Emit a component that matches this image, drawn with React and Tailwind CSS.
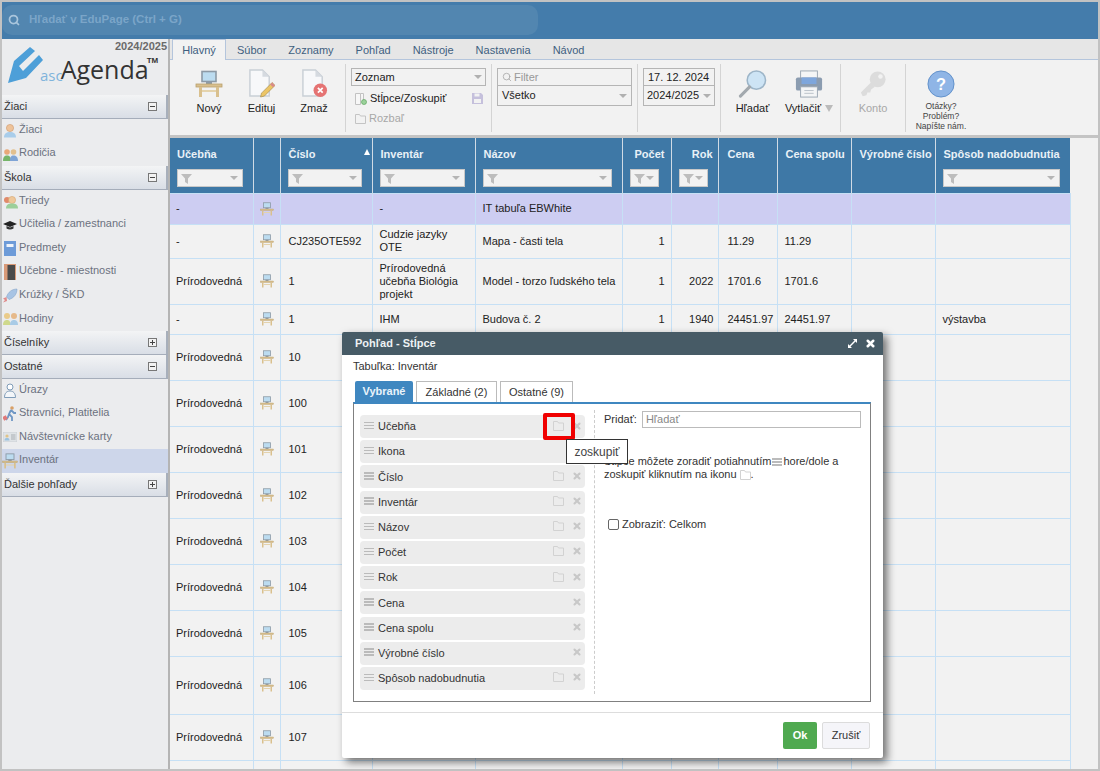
import React from 'react';
import { Search, X } from 'lucide-react';

const FONT = "font-['Liberation_Sans',Arial,sans-serif]";

// ── small drawings ────────────────────────────────────────────────────
function Desk({ size = 16 }) {
  return (
    <svg width={size} height={size} viewBox="0 0 28 28" className="block">
      <rect x="7" y="1.5" width="14" height="10" fill="#bcdcf0" stroke="#8d9aa6" strokeWidth="1.6" />
      <rect x="11" y="11.5" width="6" height="2.5" fill="#8d9aa6" />
      <rect x="1" y="14" width="26" height="3" fill="#d9c08e" stroke="#b9a06e" strokeWidth="0.8" />
      <rect x="4" y="17" width="3" height="10" fill="#d9c08e" />
      <rect x="21" y="17" width="3" height="10" fill="#d9c08e" />
      <rect x="7" y="20" width="14" height="2" fill="#e4d3ad" />
    </svg>
  );
}

function DocIcon({ badge }) {
  return (
    <svg width="27" height="29" viewBox="0 0 28 30" className="block">
      <path d="M2 1h13l7 7v20H2z" fill="#f7f8fa" stroke="#c9cfd6" strokeWidth="1.5" />
      <path d="M15 1v7h7z" fill="#d5dae0" />
      {badge === 'edit' && (
        <g>
          <path d="M25 14l3 3-11 11-4 1 1-4z" fill="#ecc566" stroke="#a68c4d" strokeWidth="0.7" />
          <path d="M25 14l3 3-2 2-3-3z" fill="#d98a8a" />
        </g>
      )}
      {badge === 'del' && (
        <g>
          <circle cx="20" cy="22" r="7" fill="#e57373" />
          <path d="M17.5 19.5l5 5m0-5l-5 5" stroke="#fff" strokeWidth="1.8" />
        </g>
      )}
    </svg>
  );
}

function Magnifier() {
  return (
    <svg width="29" height="28" viewBox="0 0 30 29" className="block">
      <circle cx="19" cy="10.500" r="9.500" fill="#cde4f5" stroke="#9db5c8" strokeWidth="1.6" />
      <path d="M12 17.500L2.500 27" stroke="#a3a9ae" strokeWidth="3.2" strokeLinecap="round" />
    </svg>
  );
}

function Printer() {
  return (
    <svg width="28" height="28" viewBox="0 0 30 30" className="block">
      <rect x="6" y="1" width="18" height="9" fill="#f4f5f6" stroke="#9aa6b2" />
      <rect x="1" y="8" width="28" height="14" rx="2" fill="#8b9cb0" />
      <rect x="7" y="8" width="16" height="7" fill="#7ea6dc" />
      <rect x="6" y="18" width="18" height="11" fill="#f4f5f6" stroke="#9aa6b2" />
      <path d="M10 22h10M10 25h10" stroke="#b8c0c8" />
    </svg>
  );
}

function KeyIcon() {
  return (
    <svg width="28" height="28" viewBox="0 0 30 30" className="block">
      <path d="M2 24l11-11 4 5-4 3-1 3-3 0-1 3-4 1z" fill="#dcdcdc" />
      <circle cx="20" cy="10" r="8.5" fill="#dcdcdc" />
      <circle cx="23" cy="7" r="2.4" fill="#f2f2f2" />
    </svg>
  );
}

function HelpCircle() {
  return (
    <svg width="28" height="28" viewBox="0 0 29 29" className="block">
      <circle cx="14.5" cy="14.5" r="13.5" fill="#8fb5e6" stroke="#5f8fc9" />
      <text x="14.5" y="20.5" textAnchor="middle" fontSize="17" fontWeight="700" fill="#fff" fontFamily="Liberation Sans">?</text>
    </svg>
  );
}

function FunnelArrow() {
  return (
    <>
      <svg width="11" height="11" viewBox="0 0 11 11" className="block shrink-0">
        <path d="M0 1h11L7 5.5V11L4 9V5.5z" fill="#bdbdbd" />
      </svg>
      <span className="ml-auto w-0 h-0 border-x-[4px] border-x-transparent border-t-[4px] border-t-[#b5b5b5]" />
    </>
  );
}

function FolderGlyph({ color = '#d2d2d2' }) {
  return (
    <svg width="11" height="10" viewBox="0 0 11 10" className="block">
      <path d="M.5 9.5V.5h4l1 1.5h5v7.500z" fill="none" stroke={color} />
    </svg>
  );
}

function Handle() {
  return (
    <span className="flex flex-col gap-[1.500px] w-[10px] shrink-0">
      <span className="h-[1.500px] bg-[#bbb]" />
      <span className="h-[1.500px] bg-[#bbb]" />
      <span className="h-[1.500px] bg-[#bbb]" />
    </span>
  );
}

function Person({ skin = '#eec39a', body = '#a9cdea' }) {
  return (
    <svg width="14" height="15" viewBox="0 0 14 15" className="block">
      <circle cx="7" cy="5" r="3.6" fill={skin} stroke="#c98f5f" strokeWidth="0.5" />
      <path d="M1 14.5c0-4 2.5-5.5 6-5.5s6 1.500 6 5.500z" fill={body} />
    </svg>
  );
}

function SideIcon({ name }) {
  if (name === 'ziaci') return <Person />;
  if (name === 'rodicia')
    return (
      <svg width="15" height="15" viewBox="0 0 15 15" className="block">
        <circle cx="4" cy="5" r="2.8" fill="#e8a878" />
        <path d="M0 14c0-4 1.500-5.500 4-5.500S8 10 8 14z" fill="#76b56a" />
        <circle cx="10.500" cy="5" r="2.800" fill="#e3c08e" />
        <path d="M7 14c0-4 1-5.500 3.500-5.500S15 10 15 14z" fill="#7fa4d6" />
      </svg>
    );
  if (name === 'triedy')
    return (
      <svg width="15" height="15" viewBox="0 0 15 15" className="block">
        <circle cx="4" cy="6" r="3" fill="#e08a6a" />
        <circle cx="9" cy="6" r="3.600" fill="#efc89b" stroke="#d09a60" strokeWidth="0.5" />
        <path d="M3 14.500c0-4 2.500-5 6-5s6 1 6 5z" fill="#9ccf9a" />
      </svg>
    );
  if (name === 'ucitelia')
    return (
      <svg width="14" height="14" viewBox="0 0 14 14" className="block">
        <path d="M0 6l7-3 7 3-7 3z" fill="#222" />
        <path d="M3.500 8v2.500c2 1.200 5 1.200 7 0V8L7 9.500z" fill="#333" />
      </svg>
    );
  if (name === 'predmety')
    return (
      <svg width="12" height="15" viewBox="0 0 12 15" className="block">
        <rect x="0" y="0" width="12" height="15" fill="#6d9bd8" />
        <rect x="2.500" y="3" width="7" height="3" fill="#eef3fa" />
      </svg>
    );
  if (name === 'ucebne')
    return (
      <svg width="12" height="16" viewBox="0 0 12 16" className="block">
        <rect x="0" y="0" width="12" height="16" fill="#d99a78" />
        <rect x="3.500" y="1" width="7.500" height="15" fill="#4a4a4a" />
      </svg>
    );
  if (name === 'kruzky')
    return (
      <svg width="15" height="15" viewBox="0 0 15 15" className="block">
        <path d="M14 1c-5 0-9 3-10.500 8l2.500 2.500C11 10 14 6 14 1z" fill="#a8c4e4" stroke="#7b9cc2" strokeWidth="0.5" />
        <path d="M3.500 9L0 10.500 2 12l-2 2.500L4 13z" fill="#e08a8a" />
      </svg>
    );
  if (name === 'hodiny')
    return (
      <svg width="15" height="14" viewBox="0 0 15 14" className="block">
        <circle cx="4" cy="4" r="3" fill="#eacb8a" />
        <circle cx="11" cy="4" r="3" fill="#e6b98a" />
        <path d="M0 13c0-4 2-5 4-5s3.500 1 3.500 5z" fill="#cfd98c" />
        <path d="M7 13c0-4 2-5 4-5s4 1 4 5z" fill="#a9cbe6" />
      </svg>
    );
  if (name === 'urazy')
    return (
      <svg width="14" height="15" viewBox="0 0 14 15" className="block">
        <circle cx="7" cy="4" r="3" fill="#fff" stroke="#7f9cb8" />
        <path d="M1.500 14.500c0-4 2-6.500 5.500-6.500s5.500 2.500 5.500 6.500z" fill="#f3f6f9" stroke="#7f9cb8" />
      </svg>
    );
  if (name === 'stravnici')
    return (
      <svg width="14" height="16" viewBox="0 0 14 16" className="block">
        <circle cx="9" cy="2" r="1.800" fill="#d9a066" />
        <path d="M8 4l3 3 2 0M8 4L6 8l3 3 0 4M6 8l-1 3-2 3" stroke="#6f97c4" strokeWidth="1.800" fill="none" />
        <rect x="0" y="10" width="4" height="4" fill="#e07a7a" transform="rotate(-30 2 12)" />
      </svg>
    );
  if (name === 'karty')
    return (
      <svg width="14" height="10" viewBox="0 0 14 10" className="block">
        <rect x="0" y="0" width="14" height="10" fill="#dfe3e6" stroke="#c2c7cc" strokeWidth="0.600" />
        <circle cx="4" cy="4" r="1.600" fill="#dfc48a" />
        <path d="M1.500 8.500c0-2 1-2.500 2.500-2.500s2.500.5 2.500 2.500z" fill="#9cc3e0" />
        <path d="M8 3h4.500M8 5h4.500M8 7h4.500" stroke="#a9aeb3" />
      </svg>
    );
  return <Desk size={16} />;
}

// ── sidebar ───────────────────────────────────────────────────────────
function GroupHeader({ label, open }) {
  return (
    <div className="h-[23.700px] flex items-center pl-[2px] pr-[9px] text-[11px] text-[#333] bg-gradient-to-b from-[#f3f4f5] to-[#d9dee6] border-b border-[#a5adba] border-r-2 border-r-[#a7afbb]">
      <span>{label}</span>
      <span className="ml-auto w-[9px] h-[9px] border border-[#777] bg-[#f2f2f2] relative">
        <span className="absolute left-[1px] right-[1px] top-[3px] h-px bg-[#444]" />
        {!open && <span className="absolute top-[1px] bottom-[1px] left-[3px] w-px bg-[#444]" />}
      </span>
    </div>
  );
}

function SideItem({ icon, label, active }) {
  return (
    <div className={`h-[23.600px] flex items-center text-[11px] text-[#6b7280] ${active ? 'bg-[#cdd6ea]' : ''}`}>
      <span className="w-[16px] flex justify-center shrink-0">
        <SideIcon name={icon} />
      </span>
      <span className="ml-[1px] mb-[3px]">{label}</span>
    </div>
  );
}

function Sidebar() {
  return (
    <aside className="w-[168px] shrink-0 bg-[#ebecee] border-r-2 border-[#b4b4b4] overflow-hidden">
      <div className="h-[56px] relative">
        <div className="absolute right-[1px] top-[1px] text-[11px] leading-[13px] font-bold text-[#6a6a6a]">2024/2025</div>
        <div className="absolute left-[6px] top-[6px] flex items-start">
          <svg width="36" height="37" viewBox="0 0 36 37" className="block mt-[2px] -mr-[4px]">
            <path d="M0 36L6 14 22 0l5 4L11 19l4 5L31 8l4 5-17 18z" fill="#4d9fd8" />
          </svg>
          <span className="mt-[20px] -mr-[2px] text-[15px] leading-[20px] text-[#7fb4dc] font-['Open_Sans',sans-serif]">asc</span>
          <span className="mt-[12px] text-[25px] leading-[24px] text-[#333] font-['Open_Sans',sans-serif]">Agenda</span>
          <span className="mt-[11px] -ml-[2px] text-[8px] leading-[9px] font-bold text-[#333]">TM</span>
        </div>
      </div>
      <GroupHeader label="Žiaci" open />
      <SideItem icon="ziaci" label="Žiaci" />
      <SideItem icon="rodicia" label="Rodičia" />
      <GroupHeader label="Škola" open />
      <SideItem icon="triedy" label="Triedy" />
      <SideItem icon="ucitelia" label="Učitelia / zamestnanci" />
      <SideItem icon="predmety" label="Predmety" />
      <SideItem icon="ucebne" label="Učebne - miestnosti" />
      <SideItem icon="kruzky" label="Krúžky / ŠKD" />
      <SideItem icon="hodiny" label="Hodiny" />
      <GroupHeader label="Číselníky" />
      <GroupHeader label="Ostatné" open />
      <SideItem icon="urazy" label="Úrazy" />
      <SideItem icon="stravnici" label="Stravníci, Platitelia" />
      <SideItem icon="karty" label="Návštevnícke karty" />
      <SideItem icon="desk" label="Inventár" active />
      <GroupHeader label="Ďalšie pohľady" />
    </aside>
  );
}

// ── ribbon ────────────────────────────────────────────────────────────
const TABS = ['Súbor', 'Zoznamy', 'Pohľad', 'Nástroje', 'Nastavenia', 'Návod'];

function RibbonTabs() {
  return (
    <div className="h-[21px] pl-[2px] flex items-stretch bg-[#e6e6e6] border-b border-[#b4c5dc] text-[11px] text-[#3f5f80]">
      <div className="w-[54px] h-[21px] flex items-center justify-center bg-[#f2f2f2] border border-b-0 border-[#b4c5dc]">Hlavný</div>
      <div className="flex items-center pl-[11px] pt-[2px] gap-[22px]">
        {TABS.map(t => <span key={t}>{t}</span>)}
      </div>
    </div>
  );
}

function BigBtn({ icon, label, w, muted, caret }) {
  return (
    <div className="flex flex-col items-center shrink-0" style={{ width: w }}>
      <div className="h-[29px] flex items-end justify-center">{icon}</div>
      <div className={`mt-[3px] h-[14px] flex items-center gap-[4px] text-[11px] ${muted ? 'text-[#a8a8a8]' : 'text-[#222]'}`}>
        {label}
        {caret && <span className="w-0 h-0 border-x-[4px] border-x-transparent border-t-[7px] border-t-[#bbb]" />}
      </div>
    </div>
  );
}

function Sep({ ml }) {
  return <div className="w-px h-[68px] bg-[#d4d4d4] shrink-0" style={{ marginLeft: ml }} />;
}

function Caret() {
  return <span className="ml-auto w-0 h-0 border-x-[4px] border-x-transparent border-t-[4px] border-t-[#b0b0b0]" />;
}

function Ribbon() {
  return (
    <div className="h-[78px] bg-[#f2f2f2] border-b-[3px] border-[#c4c4c4] flex items-start pt-[4px]">
      <div className="flex shrink-0 pt-[5px] pl-[13px]">
        <BigBtn w={52} label="Nový" icon={<Desk size={28} />} />
        <BigBtn w={53} label="Edituj" icon={<DocIcon badge="edit" />} />
        <BigBtn w={52} label="Zmaž" icon={<DocIcon badge="del" />} />
      </div>
      <Sep ml={5} />
      <div className="ml-[5px] w-[135px] shrink-0 pt-[4px] text-[11px]">
        <div className="h-[18px] border border-[#b5b5b5] flex items-center px-[3px] text-[#222]">Zoznam<Caret /></div>
        <div className="mt-[3px] h-[19px] flex items-center pl-[4px] pr-[3px] text-[#222]">
          <svg width="12" height="12" viewBox="0 0 12 12" className="block mr-[3px]">
            <path d="M.5.5h5v11h-5zM5.500.5h3v7" fill="#f7f7f7" stroke="#c2c2c2" />
            <circle cx="9" cy="9" r="2.500" fill="#9bd19b" stroke="#5fa65f" strokeWidth="0.700" />
          </svg>
          Stĺpce/Zoskupiť
          <svg width="11" height="11" viewBox="0 0 11 11" className="block ml-auto">
            <path d="M0 0h9l2 2v9H0z" fill="#c5c0dc" />
            <rect x="2.500" y="0.500" width="5" height="3" fill="#f2f2f2" />
            <rect x="2" y="6" width="7" height="4" fill="#f2f2f2" />
          </svg>
        </div>
        <div className="mt-[1px] h-[19px] flex items-center pl-[4px] text-[#a8a8a8]">
          <span className="mr-[3px]"><FolderGlyph color="#c4c4c4" /></span>Rozbaľ
        </div>
      </div>
      <Sep ml={5} />
      <div className="ml-[5px] w-[135px] shrink-0 pt-[4px] text-[11px]">
        <div className="h-[18px] border border-[#b5b5b5] flex items-center px-[4px] text-[#999]">
          <Search size={10} color="#aaa" strokeWidth={2} className="mr-[2px]" />Filter
        </div>
        <div className="h-[20px] border border-t-0 border-[#b5b5b5] flex items-center px-[4px] text-[#222]">Všetko<Caret /></div>
      </div>
      <Sep ml={5} />
      <div className="ml-[5px] w-[72px] shrink-0 pt-[4px] text-[11px]">
        <div className="h-[18px] border border-[#b5b5b5] flex items-center px-[4px] text-[#222]">17. 12. 2024</div>
        <div className="h-[20px] border border-t-0 border-[#b5b5b5] flex items-center px-[3px] text-[#222]">2024/2025<Caret /></div>
      </div>
      <Sep ml={5} />
      <div className="flex shrink-0 pt-[5px]">
        <BigBtn w={63} label="Hľadať" icon={<Magnifier />} />
        <BigBtn w={50} label="Vytlačiť" caret icon={<Printer />} />
      </div>
      <Sep ml={6} />
      <div className="flex shrink-0 pt-[5px]">
        <BigBtn w={64} label="Konto" muted icon={<KeyIcon />} />
      </div>
      <Sep ml={0} />
      <div className="w-[70px] shrink-0 pt-[6px] flex flex-col items-center">
        <HelpCircle />
        <div className="mt-[3px] text-[8.500px] leading-[10px] text-[#444] text-center">Otázky?<br />Problém?<br />Napíšte nám.</div>
      </div>
    </div>
  );
}

// ── table ─────────────────────────────────────────────────────────────
const COLS = [
  { w: 83, label: 'Učebňa', filter: 66, head: 'pl-[7px]' },
  { w: 27, label: '', head: 'pl-[7px]' },
  { w: 92, label: 'Číslo', filter: 74, sort: true, head: 'pl-[8px]' },
  { w: 103, label: 'Inventár', filter: 85, head: 'pl-[8px]' },
  { w: 147, label: 'Názov', filter: 129, head: 'pl-[8px]' },
  { w: 49, label: 'Počet', filter: 29, head: 'text-right pr-[6px]' },
  { w: 47, label: 'Rok', filter: 29, head: 'text-right pr-[5px]' },
  { w: 59, label: 'Cena', head: 'pl-[9px]' },
  { w: 74, label: 'Cena spolu', head: 'pl-[8px]' },
  { w: 84, label: 'Výrobné číslo', head: 'pl-[8px]' },
  { w: 135, label: 'Spôsob nadobudnutia', filter: 117, head: 'pl-[8px]' },
];

const ROWS = [
  { h: 31, purple: true, cells: ['-', '', '-', 'IT tabuľa EBWhite', '', '', '', '', '', ''] },
  { h: 34, cells: ['-', 'CJ235OTE592', 'Cudzie jazyky\nOTE', 'Mapa - časti tela', '1', '', '11.29', '11.29', '', ''] },
  { h: 46, cells: ['Prírodovedná', '1', 'Prírodovedná\nučebňa Biológia\nprojekt', 'Model - torzo ľudského tela', '1', '2022', '1701.6', '1701.6', '', ''] },
  { h: 30, cells: ['-', '1', 'IHM', 'Budova č. 2', '1', '1940', '24451.97', '24451.97', '', 'výstavba'] },
  { h: 46, cells: ['Prírodovedná', '10'] },
  { h: 46, cells: ['Prírodovedná', '100'] },
  { h: 46, cells: ['Prírodovedná', '101'] },
  { h: 46, cells: ['Prírodovedná', '102'] },
  { h: 46, cells: ['Prírodovedná', '103'] },
  { h: 46, cells: ['Prírodovedná', '104'] },
  { h: 46, cells: ['Prírodovedná', '105'] },
  { h: 58, cells: ['Prírodovedná', '106'] },
  { h: 46, cells: ['Prírodovedná', '107'] },
];

function DataTable() {
  const td = 'border border-[#c6e0f5] py-0 leading-[13px] align-middle';
  return (
    <div className="flex-1 bg-[#f1f1f1] overflow-hidden">
      <table className="table-fixed border-collapse w-[900px] text-[11px] text-[#222]">
        <colgroup>
          {COLS.map((c, i) => <col key={i} style={{ width: c.w }} />)}
        </colgroup>
        <thead>
          <tr className="h-[55px] bg-[#3e78a6]">
            {COLS.map((c, i) => (
              <th key={i} className={`relative p-0 align-top font-bold text-[#e9f1f7] text-left ${i < COLS.length - 1 ? 'border-r border-[#d0dbe5]' : ''}`}>
                <div className={`pt-[9px] h-[23px] leading-[14px] whitespace-nowrap ${c.head}`}>{c.label}</div>
                {c.sort && <span className="absolute right-[2px] top-[11px] w-0 h-0 border-x-[3.500px] border-x-transparent border-b-[6px] border-b-white" />}
                {c.filter && (
                  <div className="mt-[8px] ml-[7px] h-[18px] bg-[#f2f2f2] border border-[#c8c8c8] flex items-center px-[3px] pr-[4px]" style={{ width: c.filter }}>
                    <FunnelArrow />
                  </div>
                )}
              </th>
            ))}
          </tr>
        </thead>
        <tbody>
          {ROWS.map((row, r) => {
            const [ucebna, cislo, inventar, nazov, pocet, rok, cena, spolu, vyrobne, sposob] = row.cells;
            return (
              <tr key={r} className={row.purple ? 'bg-[#cdcdf2]' : 'bg-[#f2f2f2]'} style={{ height: row.h }}>
                <td className={`${td} border-l-0 pl-[6px]`}>{ucebna}</td>
                <td className={td}><div className="flex justify-center"><Desk size={14} /></div></td>
                <td className={`${td} pl-[8px]`}>{cislo}</td>
                <td className={`${td} pl-[7px] whitespace-pre-line`}>{inventar}</td>
                <td className={`${td} pl-[7px]`}>{nazov}</td>
                <td className={`${td} text-right pr-[6px]`}>{pocet}</td>
                <td className={`${td} text-right pr-[4px]`}>{rok}</td>
                <td className={`${td} pl-[9px]`}>{cena}</td>
                <td className={`${td} pl-[7px]`}>{spolu}</td>
                <td className={`${td} pl-[7px]`}>{vyrobne}</td>
                <td className={`${td} pl-[7px]`}>{sposob}</td>
              </tr>
            );
          })}
          {/* last row, only the top of its long name shows above the window edge */}
          <tr className="bg-[#f2f2f2] h-[46px]">
            <td className={`${td} border-l-0`} />
            <td className={td} />
            <td className={td} />
            <td className={td} />
            <td className={`${td} pl-[7px] align-top pt-[6px]`}>Nabíjačka - čítačka</td>
            <td className={td} />
            <td className={td} />
            <td className={td} />
            <td className={td} />
            <td className={td} />
            <td className={td} />
          </tr>
        </tbody>
      </table>
    </div>
  );
}

// ── dialog ────────────────────────────────────────────────────────────
const COLUMN_ROWS = [
  { label: 'Učebňa', folder: true },
  { label: 'Ikona' },
  { label: 'Číslo', folder: true },
  { label: 'Inventár', folder: true },
  { label: 'Názov', folder: true },
  { label: 'Počet', folder: true },
  { label: 'Rok', folder: true },
  { label: 'Cena' },
  { label: 'Cena spolu' },
  { label: 'Výrobné číslo' },
  { label: 'Spôsob nadobudnutia', folder: true },
];

function ColumnRow({ label, folder }) {
  return (
    <div className="h-[23px] rounded-[4px] bg-[#ececec] flex items-center pl-[4px] text-[11px] text-[#333]">
      <span className="-mt-[2px]"><Handle /></span>
      <span className="ml-[4px]">{label}</span>
      <span className="ml-auto w-[11px] -mt-[2px]">{folder && <FolderGlyph />}</span>
      <X size={10} color="#c8c8c8" strokeWidth={5} className="ml-[8px] mr-[3px] -mt-[2px]" />
    </div>
  );
}

function Dialog() {
  return (
    <div className="absolute left-[340px] top-[330px] w-[541px] h-[426px] bg-white rounded-[2px] shadow-[4px_4px_9px_rgba(0,0,0,0.55)] text-[11px] text-[#333]">
      <div className="h-[23px] bg-[#475b66] rounded-t-[2px] flex items-center pl-[13px] pr-[7px] text-white font-bold">
        <span className="text-[#edf1f3]">Pohľad - Stĺpce</span>
        <svg width="9" height="9" viewBox="0 0 9 9" className="block ml-auto">
          <path d="M0 9V5l1.500 1.500L6.500 1.500 5 0h4v4L7.500 2.500 2.500 7.500 4 9z" fill="#fff" />
        </svg>
        <X size={11} color="#fff" strokeWidth={5.500} className="ml-[8px]" />
      </div>
      <div className="pl-[11px] pt-[5px] h-[26px] leading-[13px]">Tabuľka: Inventár</div>
      <div className="ml-[13px] flex gap-[3px] h-[21px]">
        <div className="w-[58px] bg-[#3f87c0] rounded-t-[2px] flex items-center justify-center font-bold text-[#eaf3fa]">Vybrané</div>
        <div className="w-[81px] border border-b-0 border-[#bbb] flex items-center justify-center">Základné (2)</div>
        <div className="w-[73px] border border-b-0 border-[#bbb] flex items-center justify-center">Ostatné (9)</div>
      </div>
      <div className="ml-[11px] w-[518px] h-[300px] border border-[#808080] border-t-2 border-t-[#3f87c0] flex">
        <div className="ml-[6px] mt-[11px] w-[225px] flex flex-col gap-[2.200px]">
          {COLUMN_ROWS.map(r => <ColumnRow key={r.label} {...r} />)}
        </div>
        <div className="ml-[9px] mt-[6px] h-[284px] border-l border-dashed border-[#ccc]" />
        <div className="ml-[9px] flex-1 pr-[9px]">
          <div className="mt-[7px] flex items-center">
            <span>Pridať:</span>
            <div className="ml-[5px] h-[17px] flex-1 border border-[#bbb] flex items-center px-[3px] text-[#888]">Hľadať</div>
          </div>
          <div className="mt-[27px] leading-[13px]">
            Stĺpce môžete zoradiť potiahnutím
            <span className="inline-block align-middle mx-[1px]"><Handle /></span>hore/dole a<br />
            zoskupiť kliknutím na ikonu{' '}
            <span className="inline-block align-middle"><FolderGlyph /></span>.
          </div>
          <div className="mt-[35px] ml-[4px] flex items-center">
            <span className="w-[11px] h-[11px] border border-[#666] rounded-[2px] bg-white" />
            <span className="ml-[3px]">Zobraziť: Celkom</span>
          </div>
        </div>
      </div>
      <div className="mt-[10px] border-t border-[#ddd] pt-[9px] pr-[13px] flex justify-end gap-[5px]">
        <div className="w-[34px] h-[27px] rounded-[2px] bg-[#4fa950] flex items-center justify-center font-bold text-white">Ok</div>
        <div className="w-[48px] h-[27px] rounded-[2px] bg-[#f5f5f9] border border-[#dcdcdc] flex items-center justify-center">Zrušiť</div>
      </div>
      {/* red highlight + tooltip lie over the list */}
      <div className="absolute left-[201px] top-[81px] w-[32px] h-[27px] border-[4px] border-[#f00000] rounded-[2px]" />
      <div className="absolute left-[224px] top-[107px] w-[62px] h-[25px] bg-white border border-[#333] flex items-center justify-center text-[12px] text-[#444]">zoskupiť</div>
    </div>
  );
}

export default function App() {
  return (
    <div className={`relative w-[1100px] h-[771px] overflow-hidden border-2 border-[#c2c2c2] bg-[#f0f0f0] flex flex-col ${FONT}`}>
      <div className="h-[37px] shrink-0 bg-[#447cab] flex items-start">
        <div className="w-[536px] h-[30px] mt-[3px] rounded-[10px] bg-[#5286b0] flex items-center pl-[6px] text-[11.500px] font-bold text-[#7ba5c8]">
          <Search size={12} color="#a9c5dc" strokeWidth={3.500} />
          <span className="ml-[9px]">Hľadať v EduPage (Ctrl + G)</span>
        </div>
      </div>
      <div className="flex-1 flex min-h-0">
        <Sidebar />
        <div className="flex-1 flex flex-col min-w-0">
          <RibbonTabs />
          <Ribbon />
          <DataTable />
        </div>
      </div>
      <Dialog />
    </div>
  );
}
